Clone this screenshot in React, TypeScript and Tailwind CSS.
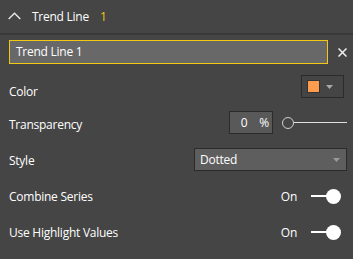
import React from "react";

const Toggle = () => (
  <div className="flex items-center">
    <span className="mr-[14px] mt-[2px]">On</span>
    <div className="w-[16px] h-[2px] bg-white" />
    <div className="w-[15px] h-[15px] rounded-full bg-white -ml-[1px]" />
  </div>
);

export default function App() {
  return (
    <div
      className="w-[353px] h-[259px] bg-[#454545] text-white text-[12px] leading-none tracking-[-0.25px] overflow-hidden"
      style={{ fontFamily: '"Open Sans", "Noto Sans", sans-serif' }}
    >
      {/* header */}
      <div className="h-[35px] flex items-center pl-[8px] border-b-2 border-[#393939]">
        <svg width="13" height="8" viewBox="0 0 13 8" className="mb-[1px]">
          <path d="M0.7 7 L6.5 1.2 L12.3 7" fill="none" stroke="#e8e8e8" strokeWidth="1.4" />
        </svg>
        <span className="ml-[11px]">Trend Line</span>
        <span className="ml-[11px] text-[#f2c811]">1</span>
      </div>

      {/* name input */}
      <div className="flex items-center pl-[9px] mt-[5px]">
        <div className="w-[319px] h-[24px] bg-[#686868] border border-[#f2c811] flex items-center pl-[6px]">
          Trend Line 1
        </div>
        <svg width="9" height="9" viewBox="0 0 9 9" className="ml-[10px]">
          <path d="M0.5 0.5 L8.5 8.5 M8.5 0.5 L0.5 8.5" stroke="#f0f0f0" strokeWidth="1.5" />
        </svg>
      </div>

      <div className="pl-[9px] mt-[5px]">
        {/* Color */}
        <div className="h-[35px] flex items-center justify-between pr-[9px]">
          <span className="mt-[10px]">Color</span>
          <div className="w-[43px] h-[23px] border border-[#2b2b2b] flex items-center pl-[5px]">
            <div className="w-[13px] h-[13px] bg-[#fd9c4e] border border-[#333]" />
            <svg width="7" height="4" viewBox="0 0 7 4" className="ml-[6px]">
              <path d="M0 0 L7 0 L3.5 4 Z" fill="#a8a8a8" />
            </svg>
          </div>
        </div>

        {/* Transparency */}
        <div className="h-[37px] flex items-center justify-between pr-[6px]">
          <span className="mt-[4px]">Transparency</span>
          <div className="flex items-center">
            <div className="w-[44px] h-[23px] bg-[#595959] border border-[#2b2b2b] flex items-center justify-end pr-[3px]">
              <span>0</span>
              <span className="ml-[12px]">%</span>
            </div>
            <div className="ml-[9px] w-[12px] h-[12px] rounded-full border-[1.5px] border-[#d0d0d0]" />
            <div className="w-[53px] h-[1px] bg-[#e0e0e0]" />
          </div>
        </div>

        {/* Style */}
        <div className="h-[37px] flex items-center justify-between pr-[6px]">
          <span className="mt-[3px]">Style</span>
          <div className="w-[153px] h-[23px] bg-[#5e5e5e] border border-[#2b2b2b] flex items-center justify-between pl-[5px] pr-[6px]">
            <span>Dotted</span>
            <svg width="7" height="4" viewBox="0 0 7 4">
              <path d="M0 0 L7 0 L3.5 4 Z" fill="#9a9a9a" />
            </svg>
          </div>
        </div>

        {/* Combine Series */}
        <div className="h-[36px] flex items-center justify-between pr-[12px]">
          <span className="mt-[2px]">Combine Series</span>
          <Toggle />
        </div>

        {/* Use Highlight Values */}
        <div className="h-[36px] flex items-center justify-between pr-[12px]">
          <span className="mt-[2px]">Use Highlight Values</span>
          <Toggle />
        </div>
      </div>
    </div>
  );
}
